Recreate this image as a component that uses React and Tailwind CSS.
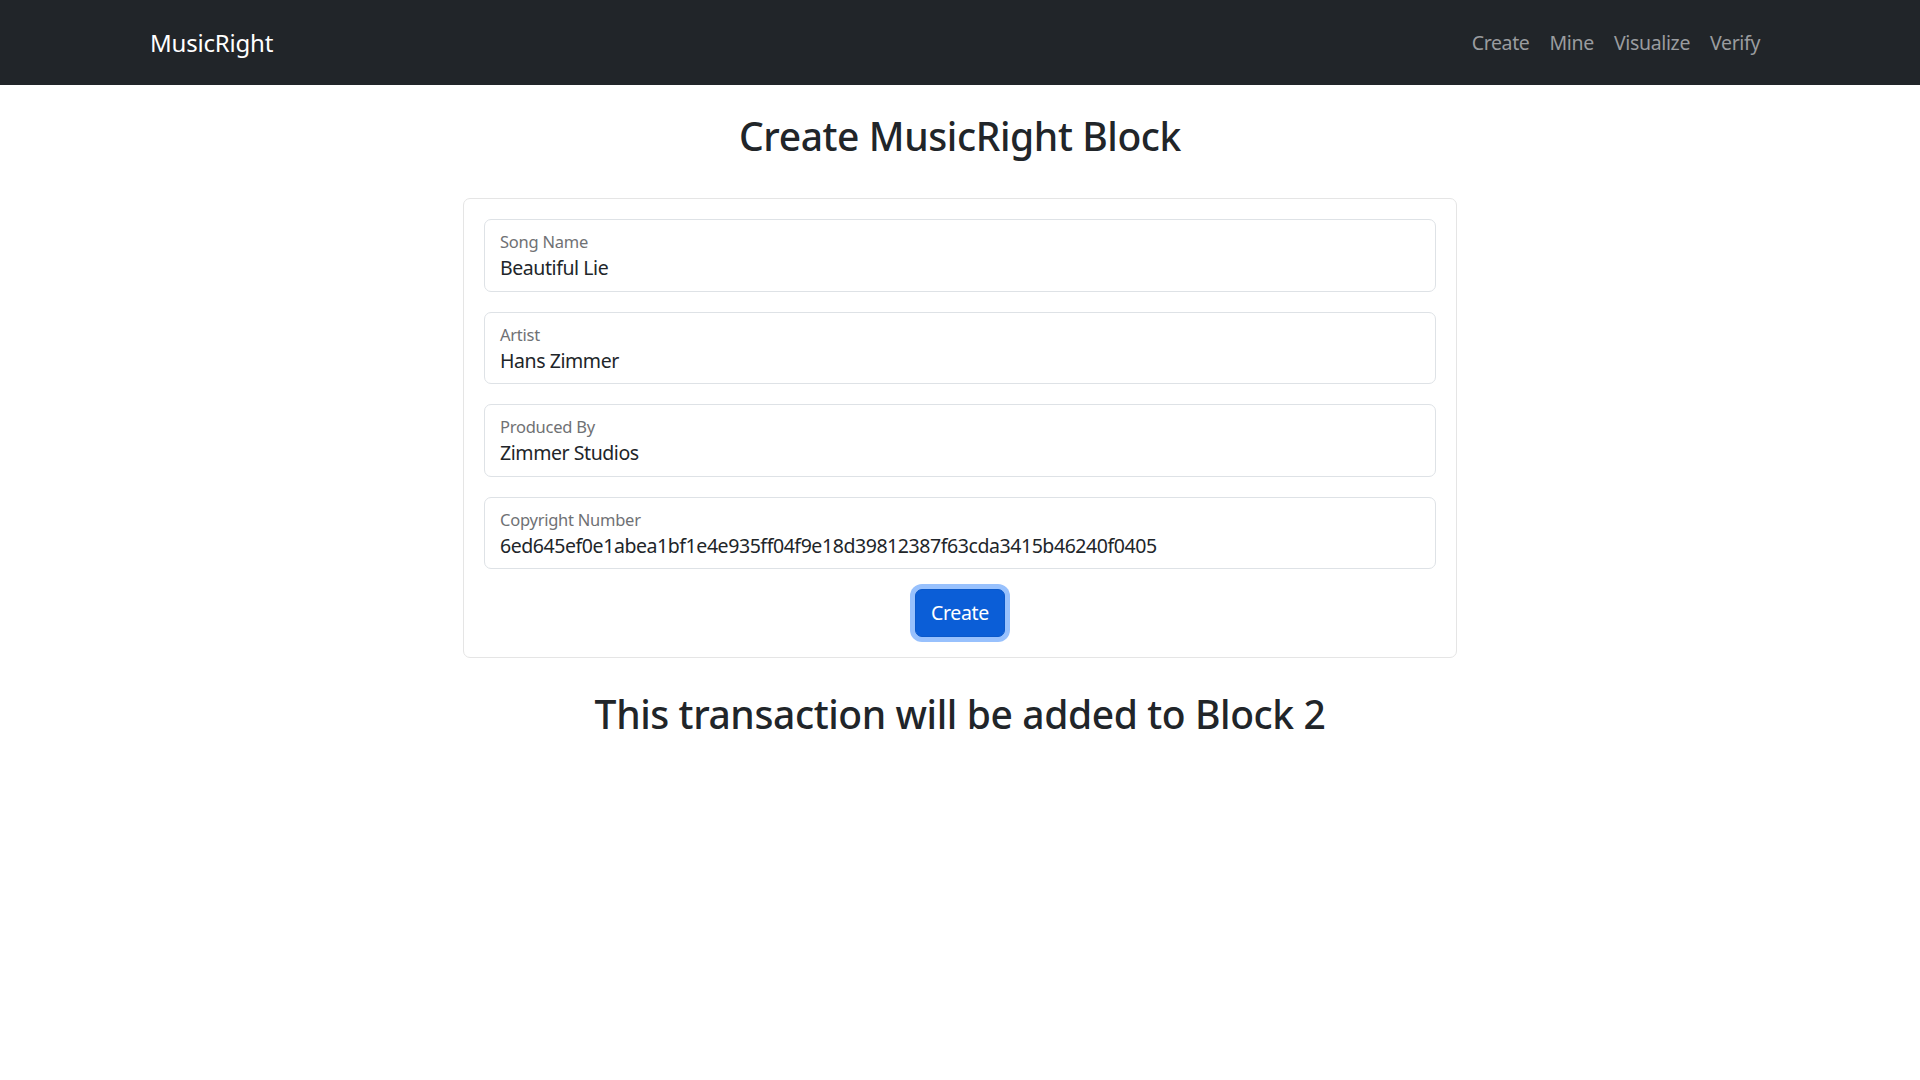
import React from "react";

const fields = [
  { label: "Song Name", value: "Beautiful Lie" },
  { label: "Artist", value: "Hans Zimmer" },
  { label: "Produced By", value: "Zimmer Studios" },
  {
    label: "Copyright Number",
    value: "6ed645ef0e1abea1bf1e4e935ff04f9e18d39812387f63cda3415b46240f0405",
  },
];

function FloatingField({ label, value }) {
  return (
    <div className="h-[72.5px] border border-[#dee2e6] rounded-[7px] px-[15px] pt-[12px] mb-[20px] bg-white">
      <div className="text-[16.5px] leading-[20px] tracking-[-0.25px] text-[#6f7174]">{label}</div>
      <div className="text-[19.5px] leading-[30px] tracking-[-0.43px] mt-[1px] text-[#212529]">{value}</div>
    </div>
  );
}

export default function App() {
  return (
    <div className="min-h-screen bg-white text-[#212529] font-['Noto_Sans',sans-serif]">
      {/* Navbar */}
      <nav className="h-[85px] bg-[#212529]">
        <div className="w-[1650px] h-full mx-auto px-[15px] flex items-center justify-between">
          <span className="text-[24px] tracking-[-0.2px] text-white">MusicRight</span>
          <div className="flex">
            {["Create", "Mine", "Visualize", "Verify"].map((link) => (
              <a key={link} className="px-[10px] text-[19.5px] tracking-[-0.35px] text-[#9a9c9f]">
                {link}
              </a>
            ))}
          </div>
        </div>
      </nav>

      <main className="w-[1650px] mx-auto px-[15px]">
        <h2 className="mt-[27px] mb-[38px] text-center text-[39px] leading-[48px] tracking-[-0.4px] font-medium">
          Create MusicRight Block
        </h2>

        {/* Form card */}
        <div className="w-[994px] mx-auto border border-[#e5e5e5] rounded-[7px] p-[20px]">
          {fields.map((f) => (
            <FloatingField key={f.label} label={f.label} value={f.value} />
          ))}
          <div className="flex justify-center">
            <button className="h-[48px] px-[15px] text-[19.5px] tracking-[-0.35px] text-white bg-[#0b5ed7] border border-[#0a58ca] rounded-[7px] ring-[5px] ring-[#98c1fd]">
              Create
            </button>
          </div>
        </div>

        <h2 className="mt-[32px] text-center text-[39px] leading-[48px] tracking-[-0.4px] font-medium">
          This transaction will be added to Block 2
        </h2>
      </main>
    </div>
  );
}
